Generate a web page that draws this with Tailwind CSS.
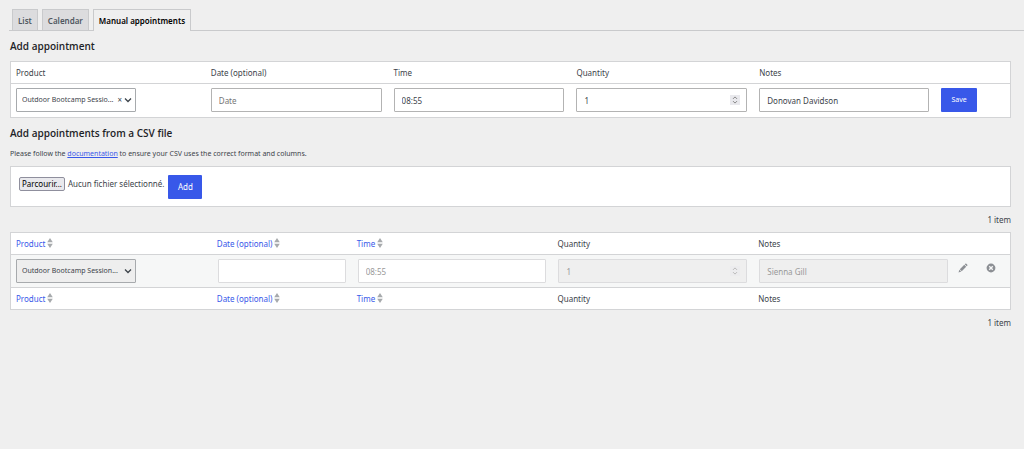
<!DOCTYPE html>
<html lang="en">
<head>
    <meta charset="UTF-8">
    <meta name="viewport" content="width=device-width, initial-scale=1.0">
    <title>Manual appointments</title>
    <script src="https://cdn.jsdelivr.net/npm/@tailwindcss/browser@4"></script>
</head>
<body class="min-h-screen bg-[#efefef] font-['Noto_Sans','Open_Sans',sans-serif] text-[8px] leading-3 text-[#3c434a]">
    <svg class="hidden">
        <symbol id="chevron" viewBox="0 0 8 8"><path d="M1 2.5l3 3 3-3" fill="none" stroke="currentColor" stroke-width="1.3"/></symbol>
        <symbol id="sort" viewBox="0 0 6 10"><path d="M3 0L5.8 4.2H0.2zM3 10L0.2 5.8h5.6z" fill="currentColor"/></symbol>
        <symbol id="spinner" viewBox="0 0 10 10"><path d="M3 3.9l2-2 2 2M3 6.1l2 2 2-2" fill="none" stroke="currentColor" stroke-width="1"/></symbol>
    </svg>

    <nav class="ml-[9px] flex border-b border-[#c9cacc] pt-[9px] pl-[3px] font-semibold">
        <a href="#" class="mr-1 border border-b-0 border-[#c9cacc] bg-[#dcdcde] px-[5px] pt-[5px] pb-[3px] text-[#50575e]">List</a>
        <a href="#" class="mr-1 border border-b-0 border-[#c9cacc] bg-[#dcdcde] px-[5px] pt-[5px] pb-[3px] text-[#50575e]">Calendar</a>
        <a href="#" class="-mb-px border border-b-0 border-[#c9cacc] bg-[#efefef] px-[5px] pt-[5px] pb-1 text-black">Manual appointments</a>
    </nav>

    <main class="pr-[13px] pl-2.5">
        <h2 class="py-2 font-['Open_Sans',sans-serif] text-[10px] leading-3.5 font-semibold text-[#1d2327]">Add appointment</h2>

        <table class="w-full table-fixed border-separate border-spacing-0 border border-[#d3d4d6] bg-white">
            <colgroup>
                <col class="w-[19.4%]">
                <col class="w-[18.3%]">
                <col class="w-[18.3%]">
                <col class="w-[18.3%]">
                <col class="w-[18.2%]">
                <col>
            </colgroup>
            <thead>
                <tr class="text-left leading-[13px]">
                    <th class="border-b border-[#d3d4d6] px-[5px] py-1 font-normal">Product</th>
                    <th class="border-b border-[#d3d4d6] px-1.5 font-normal">Date (optional)</th>
                    <th class="border-b border-[#d3d4d6] px-1.5 font-normal">Time</th>
                    <th class="border-b border-[#d3d4d6] px-1.5 font-normal">Quantity</th>
                    <th class="border-b border-[#d3d4d6] px-1.5 font-normal">Notes</th>
                    <th class="border-b border-[#d3d4d6]"></th>
                </tr>
            </thead>
            <tbody>
                <tr>
                    <td class="px-[5px] pt-1 pb-[5px]">
                        <div class="relative w-30">
                            <select aria-label="Product" class="block h-6 w-full appearance-none rounded-[1px] border border-[#a7aaad] bg-white pl-[5px] text-[7px]">
                                <option>Outdoor Bootcamp Sessio...</option>
                            </select>
                            <button type="button" aria-label="Clear product" class="absolute top-1.5 right-3.5">×</button>
                            <svg class="pointer-events-none absolute top-2 right-1 size-2"><use href="#chevron"/></svg>
                        </div>
                    </td>
                    <td class="px-1.5 pt-1 pb-[5px]"><input type="text" aria-label="Date (optional)" placeholder="Date" class="block h-6 w-full rounded-[1px] border border-[#b3b3b3] bg-white px-[7px] placeholder:text-[#757575]"></td>
                    <td class="px-1.5 pt-1 pb-[5px]"><input type="text" aria-label="Time" value="08:55" class="block h-6 w-full rounded-[1px] border border-[#b3b3b3] bg-white px-[7px]"></td>
                    <td class="px-1.5 pt-1 pb-[5px]">
                        <div class="relative">
                            <input type="number" aria-label="Quantity" value="1" class="block h-6 w-full [appearance:textfield] rounded-[1px] border border-[#b3b3b3] bg-white px-[7px]">
                            <svg class="pointer-events-none absolute top-[7px] right-[7px] size-2.5 bg-[#e9e9ed] text-[#888]"><use href="#spinner"/></svg>
                        </div>
                    </td>
                    <td class="px-1.5 pt-1 pb-[5px]"><input type="text" aria-label="Notes" value="Donovan Davidson" class="block h-6 w-full rounded-[1px] border border-[#b3b3b3] bg-white px-[7px]"></td>
                    <td class="px-1.5 pt-1 pb-[5px]"><button type="button" class="block h-6 w-9 rounded-[1px] bg-[#3858e9] text-[7px] text-white">Save</button></td>
                </tr>
            </tbody>
        </table>

        <h2 class="py-2 font-['Open_Sans',sans-serif] text-[10px] leading-3.5 font-semibold text-[#1d2327]">Add appointments from a CSV file</h2>
        <p class="text-[7px]">Please follow the <a href="#" class="text-[#3858e9] underline">documentation</a> to ensure your CSV uses the correct format and columns.</p>

        <form class="mt-1.5 flex items-start border border-[#d3d4d6] bg-white px-2 pt-2 pb-[7px]">
            <label for="csv" class="mt-0.5 flex cursor-pointer items-center">
                <span class="rounded-[2px] border border-[#8f8f9d] bg-[#e9e9ed] px-0.5 text-black">Parcourir...</span>
                <span class="ml-[3px]">Aucun fichier sélectionné.</span>
            </label>
            <input type="file" id="csv" class="sr-only">
            <button type="button" class="ml-1 h-6 w-[34px] rounded-[1px] bg-[#3858e9] text-white">Add</button>
        </form>

        <div class="py-[7px] text-right leading-[11px]">1 item</div>

        <table class="w-full table-fixed border-separate border-spacing-0 border border-[#d3d4d6] bg-white">
            <colgroup>
                <col class="w-[20.1%]">
                <col class="w-[14%]">
                <col class="w-[20.1%]">
                <col class="w-[20.1%]">
                <col class="w-[20.1%]">
                <col>
            </colgroup>
            <thead>
                <tr class="text-left leading-[13px]">
                    <th class="border-b border-[#d3d4d6] px-[5px] py-1 font-normal"><a href="#" class="flex items-center gap-0.5 text-[#3858e9]">Product <svg class="-mt-0.5 h-2.5 w-1.5 text-[#a7aaad]"><use href="#sort"/></svg></a></th>
                    <th class="border-b border-[#d3d4d6] px-[5px] font-normal"><a href="#" class="flex items-center gap-0.5 text-[#3858e9]">Date (optional) <svg class="-mt-0.5 h-2.5 w-1.5 text-[#a7aaad]"><use href="#sort"/></svg></a></th>
                    <th class="border-b border-[#d3d4d6] px-[5px] font-normal"><a href="#" class="flex items-center gap-0.5 text-[#3858e9]">Time <svg class="-mt-0.5 h-2.5 w-1.5 text-[#a7aaad]"><use href="#sort"/></svg></a></th>
                    <th class="border-b border-[#d3d4d6] px-[5px] font-normal">Quantity</th>
                    <th class="border-b border-[#d3d4d6] px-[5px] font-normal">Notes</th>
                    <th class="border-b border-[#d3d4d6]"></th>
                </tr>
            </thead>
            <tbody>
                <tr class="bg-[#f6f7f7]">
                    <td class="px-[5px] py-1">
                        <div class="relative w-30">
                            <select disabled aria-label="Product" class="block h-6 w-full appearance-none rounded-[1px] border border-[#a7aaad] bg-[#eee] pl-[5px] text-[7px] opacity-100">
                                <option>Outdoor Bootcamp Session...</option>
                            </select>
                            <svg class="pointer-events-none absolute top-2 right-1 size-2"><use href="#chevron"/></svg>
                        </div>
                    </td>
                    <td class="px-1.5"><input disabled type="text" aria-label="Date (optional)" class="block h-6 w-full rounded-[1px] border border-[#dcdcde] bg-white px-[7px]"></td>
                    <td class="px-1.5"><input disabled type="text" aria-label="Time" value="08:55" class="block h-6 w-full rounded-[1px] border border-[#dcdcde] bg-white px-[7px] text-[#999]"></td>
                    <td class="px-1.5">
                        <div class="relative">
                            <input disabled type="number" aria-label="Quantity" value="1" class="block h-6 w-full [appearance:textfield] rounded-[1px] border border-[#dcdcde] bg-[#efefef] px-[7px] text-[#999]">
                            <svg class="pointer-events-none absolute top-[7px] right-[7px] size-2.5 bg-[#ececee] text-[#bbb]"><use href="#spinner"/></svg>
                        </div>
                    </td>
                    <td class="px-1.5"><input disabled type="text" aria-label="Notes" value="Sienna Gill" class="block h-6 w-full rounded-[1px] border border-[#dcdcde] bg-[#efefef] px-[7px] text-[#999]"></td>
                    <td class="pl-1 align-top">
                        <div class="flex gap-[18px] pt-2 text-[#8c8f94]">
                            <button type="button" aria-label="Edit" class="size-2.5">
                                <svg viewBox="0 0 20 20" class="size-2.5" fill="currentColor"><path d="M13.5 2.6l3.9 3.9 1.3-1.3c.6-.6.6-1.2 0-1.8l-2.1-2.1c-.6-.6-1.2-.6-1.8 0zM12.5 3.6L3.6 12.5l3.9 3.9L16.4 7.5zM2.8 13.4L1 19l5.6-1.8z"/></svg>
                            </button>
                            <button type="button" aria-label="Delete" class="size-2.5">
                                <svg viewBox="0 0 20 20" class="size-2.5"><circle cx="10" cy="10" r="8.8" fill="currentColor"/><path d="M6.5 6.5l7 7M13.5 6.5l-7 7" stroke="#f6f7f7" stroke-width="2.8"/></svg>
                            </button>
                        </div>
                    </td>
                </tr>
            </tbody>
            <tfoot>
                <tr class="text-left leading-[13px]">
                    <th class="border-t border-[#d3d4d6] px-[5px] py-1 font-normal"><a href="#" class="flex items-center gap-0.5 text-[#3858e9]">Product <svg class="-mt-0.5 h-2.5 w-1.5 text-[#a7aaad]"><use href="#sort"/></svg></a></th>
                    <th class="border-t border-[#d3d4d6] px-[5px] font-normal"><a href="#" class="flex items-center gap-0.5 text-[#3858e9]">Date (optional) <svg class="-mt-0.5 h-2.5 w-1.5 text-[#a7aaad]"><use href="#sort"/></svg></a></th>
                    <th class="border-t border-[#d3d4d6] px-[5px] font-normal"><a href="#" class="flex items-center gap-0.5 text-[#3858e9]">Time <svg class="-mt-0.5 h-2.5 w-1.5 text-[#a7aaad]"><use href="#sort"/></svg></a></th>
                    <th class="border-t border-[#d3d4d6] px-[5px] font-normal">Quantity</th>
                    <th class="border-t border-[#d3d4d6] px-[5px] font-normal">Notes</th>
                    <th class="border-t border-[#d3d4d6]"></th>
                </tr>
            </tfoot>
        </table>

        <div class="py-[7px] text-right leading-[11px]">1 item</div>
    </main>
</body>
</html>
